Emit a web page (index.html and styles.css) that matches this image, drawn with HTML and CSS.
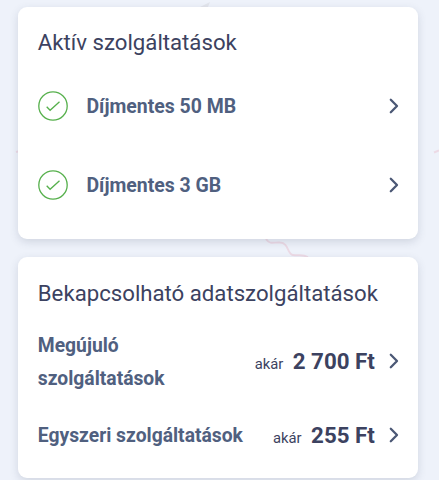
FILE: index.html
```
<!DOCTYPE html>
<html lang="hu">
<head>
    <meta charset="UTF-8">
    <meta name="viewport" content="width=device-width, initial-scale=1.0">
    <title>Szolgáltatások</title>
    <link rel="stylesheet" href="styles.css">
</head>
<body>
    <svg class="bg-lines" viewBox="0 0 439 480">
        <path class="leaf" d="M200 7 L210 2 L208 7 Z"/>
        <path d="M266 239 C270 245 274 242 280 242.500 C289 243 287 254 293 255 C299 256 302 254 308 257"/>
        <path d="M434 152.500 L439 150.500"/>
        <path d="M16 152 L20 151"/>
    </svg>

    <div class="container">
        <div class="card active">
            <h2>Aktív szolgáltatások</h2>
            <a class="row">
                <svg class="check" viewBox="0 0 30 30">
                    <circle cx="15" cy="15" r="14.200"/>
                    <path d="M8.700 15.800 L12.100 19.300 L21.500 10.700"/>
                </svg>
                <span class="name">Díjmentes 50 MB</span>
                <svg class="arrow" viewBox="0 0 10 16"><path d="M1.800 1.800 L8 8 L1.800 14.200"/></svg>
            </a>
            <a class="row">
                <svg class="check" viewBox="0 0 30 30">
                    <circle cx="15" cy="15" r="14.200"/>
                    <path d="M8.700 15.800 L12.100 19.300 L21.500 10.700"/>
                </svg>
                <span class="name">Díjmentes 3 GB</span>
                <svg class="arrow" viewBox="0 0 10 16"><path d="M1.800 1.800 L8 8 L1.800 14.200"/></svg>
            </a>
        </div>

        <div class="card offers">
            <h2>Bekapcsolható adatszolgáltatások</h2>
            <a class="row">
                <span class="name">Megújuló<br>szolgáltatások</span>
                <span class="price"><small>akár</small><strong>2 700 Ft</strong></span>
                <svg class="arrow" viewBox="0 0 10 16"><path d="M1.800 1.800 L8 8 L1.800 14.200"/></svg>
            </a>
            <a class="row">
                <span class="name">Egyszeri szolgáltatások</span>
                <span class="price"><small>akár</small><strong>255 Ft</strong></span>
                <svg class="arrow" viewBox="0 0 10 16"><path d="M1.800 1.800 L8 8 L1.800 14.200"/></svg>
            </a>
        </div>
    </div>
</body>
</html>
```

FILE: styles.css
```
* {
    box-sizing: border-box;
}

body {
    margin: 0;
    height: 480px;
    overflow: hidden;
    background: #eef2fa;
    font-family: Roboto, "Liberation Sans", sans-serif;
    color: #3c4260;
}

/* Faint decoration behind the cards */
.bg-lines {
    position: absolute;
    top: 0;
    left: 0;
    width: 439px;
    height: 480px;
    fill: none;
    stroke: #ecdae5;
    stroke-width: 1.9;
}

.bg-lines .leaf {
    fill: #e2e5ec;
    stroke: none;
}

.container {
    position: relative;
    display: flex;
    flex-direction: column;
    gap: 18.5px;
    padding: 6.5px 20.7px 0 18.3px;
}

.card {
    background: #fff;
    border-radius: 9px;
    padding: 15.5px 19.5px 0;
    box-shadow: 0 3px 8px rgba(60, 70, 100, 0.17);
}

.active {
    height: 232px;
}

.offers {
    height: 221px;
}

h2 {
    margin: 0;
    font-size: 22.2px;
    font-weight: 400;
    line-height: 40px;
    white-space: nowrap;
}

.row {
    display: flex;
    align-items: center;
}

.active .row {
    height: 79px;
}

.active h2 {
    margin-bottom: 4px;
}

.active .name {
    padding-top: 1.5px;
    font-size: 19.45px;
}

.offers h2 {
    margin-bottom: 16px;
}

.offers .row {
    margin-bottom: 21.5px;
}

.offers .arrow {
    margin-bottom: 2px;
}

.check {
    flex: none;
    width: 30px;
    height: 30px;
    margin-right: 18.7px;
    fill: none;
    stroke: #56b04c;
    stroke-width: 1.3;
}

.name {
    flex: 1;
    font-size: 19.3px;
    font-weight: 700;
    line-height: 33px;
    color: #50607f;
}

.price {
    margin-right: 14px;
    padding-top: 3px;
    white-space: nowrap;
    line-height: 33px;
}

.price small {
    margin-right: 9.5px;
    font-size: 14.8px;
}

.price strong {
    font-size: 22.3px;
    font-weight: 700;
}

.arrow {
    flex: none;
    width: 10px;
    height: 16px;
    fill: none;
    stroke: #4b5875;
    stroke-width: 2.3;
    stroke-linecap: round;
    stroke-linejoin: round;
}
```
